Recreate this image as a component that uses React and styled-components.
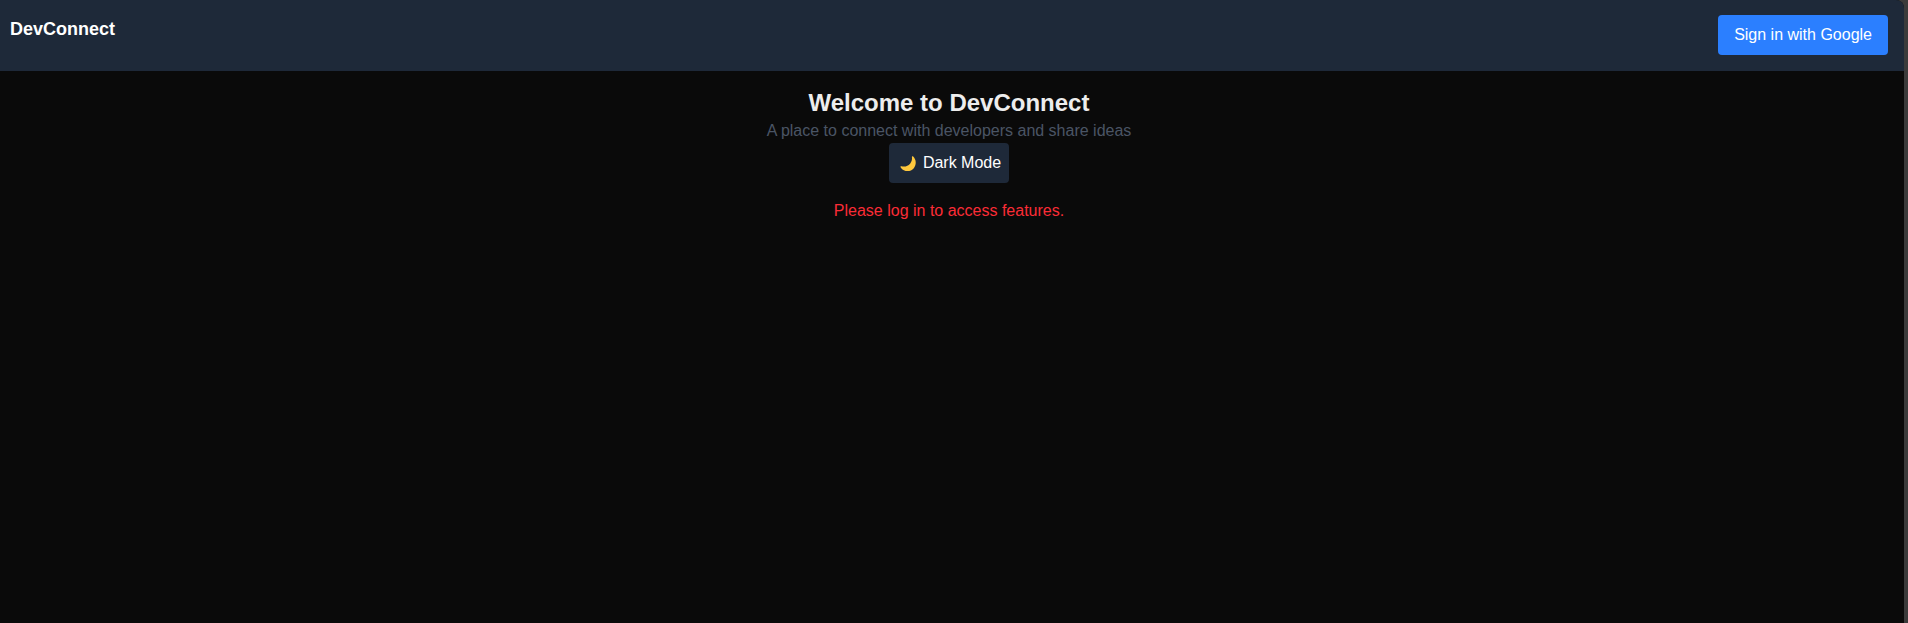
import React from "react";
import styled, { createGlobalStyle } from "styled-components";

const GlobalStyle = createGlobalStyle`
  *, *::before, *::after { box-sizing: border-box; margin: 0; padding: 0; }
  body {
    margin: 0;
    background: #3b3b3b;
    color: #ededed;
    font: 16px/24px "Liberation Sans", Arial, sans-serif;
    overflow: hidden;
  }
`;

const Frame = styled.div`
  height: 100vh;
  padding-right: 4px;
  background: #3b3b3b;
`;

const Page = styled.div`
  height: 100%;
  background: #0a0a0a;
  border-top-right-radius: 8px;
  overflow: hidden;
`;

const Header = styled.header`
  display: flex;
  justify-content: space-between;
  align-items: flex-start;
  height: 71px;
  padding: 15px 16px 16px 10px;
  background: #1e2939;
  color: #fff;
`;

const Brand = styled.h1`
  font-size: 18px;
  line-height: 28px;
  font-weight: 700;
`;

const Button = styled.button`
  display: inline-flex;
  align-items: center;
  height: 40px;
  padding: ${(p) => (p.$primary ? "0 16px" : "0 8px")};
  border: 0;
  border-radius: 4px;
  background: ${(p) => (p.$primary ? "#2b7fff" : "#1e2939")};
  color: #fff;
  font: inherit;
`;

const Main = styled.main`
  display: flex;
  flex-direction: column;
  align-items: center;
  padding: 16px 16px 16px 10px;
`;

const Heading = styled.h2`
  font-size: 24px;
  line-height: 32px;
  font-weight: 700;
`;

const Tagline = styled.p`
  color: #4a5565;
`;

const Notice = styled.p`
  margin-top: 16px;
  color: #fb2c36;
`;

const Moon = styled.svg`
  width: 18px;
  height: 18px;
  margin: 1px 6px 0 2px;
`;

export default function App() {
  return (
    <Frame>
      <GlobalStyle />
      <Page>
        <Header>
          <Brand>DevConnect</Brand>
          <Button $primary>Sign in with Google</Button>
        </Header>
        <Main>
          <Heading>Welcome to DevConnect</Heading>
          <Tagline>A place to connect with developers and share ideas</Tagline>
          <Button>
            <Moon viewBox="0 0 18 18" aria-hidden="true">
              <path
                d="M14.2 1.5C17.3 4.6 17.7 9.6 14.8 13.2C11.4 17.3 4.9 17.1 1.7 12.4C1.2 11.6 1.6 11 2.5 11.2C5.7 12.1 9 11.2 11.1 8.7C12.7 6.8 13.3 4.4 12.9 2.1C12.8 1.2 13.5 0.8 14.2 1.5Z"
                fill="#ffc83d"
              />
            </Moon>
            Dark Mode
          </Button>
          <Notice>Please log in to access features.</Notice>
        </Main>
      </Page>
    </Frame>
  );
}
